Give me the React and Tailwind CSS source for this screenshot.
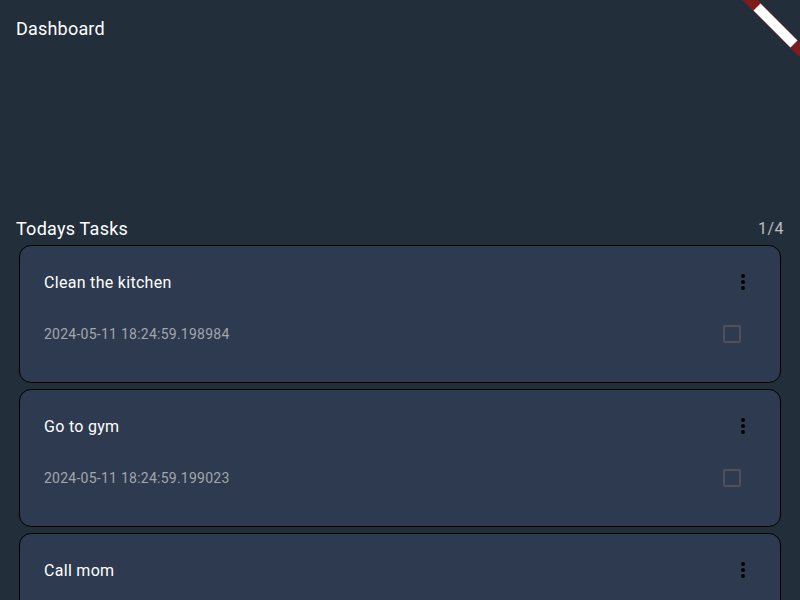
import React from "react";

const tasks = [
  { title: "Clean the kitchen", date: "2024-05-11 18:24:59.198984" },
  { title: "Go to gym", date: "2024-05-11 18:24:59.199023" },
  { title: "Call mom", date: "2024-05-11 18:24:59.199050" },
];

function Kebab() {
  return (
    <svg width="4" height="16" viewBox="0 0 4 16" className="block">
      <circle cx="2" cy="2" r="2" fill="#000" />
      <circle cx="2" cy="8" r="2" fill="#000" />
      <circle cx="2" cy="14" r="2" fill="#000" />
    </svg>
  );
}

function TaskCard({ title, date }) {
  return (
    <div className="h-[138px] shrink-0 rounded-[12px] border border-black bg-[#2d3a4f] pl-[24px] flex flex-col">
      <div className="mt-[25px] h-[24px] flex items-center justify-between pr-[35px]">
        <span className="text-[16px] leading-[24px] font-normal tracking-[0.3px] text-white">{title}</span>
        <div className="-mt-[2px]">
          <Kebab />
        </div>
      </div>
      <div className="mt-[29px] h-[20px] flex items-center justify-between pr-[39px]">
        <span className="text-[14px] leading-[20px] tracking-[0.25px] text-[#a3a6ab]">{date}</span>
        <div className="w-[18px] h-[18px] border-2 border-[#514f58] rounded-[2px]" />
      </div>
    </div>
  );
}

export default function App() {
  return (
    <div
      className="relative w-[800px] h-[600px] overflow-hidden bg-[#222e3a] text-white"
      style={{ fontFamily: "Roboto, 'Noto Sans', sans-serif" }}
    >
      <div className="px-4 pt-[18px] text-[18px] leading-[21px] tracking-[0.2px]">Dashboard</div>
      <div className="mt-[179px] px-4 flex items-center justify-between h-[22px]">
        <span className="text-[18px] leading-[22px] tracking-[0.25px]">Todays Tasks</span>
        <span className="text-[16px] leading-[22px] tracking-[0.5px] text-[#bdbdbd]">1/4</span>
      </div>
      <div className="mt-[5px] mx-[19px] flex flex-col gap-[6px]">
        {tasks.map((t) => (
          <TaskCard key={t.date} title={t.title} date={t.date} />
        ))}
      </div>
      <svg
        className="absolute top-0 right-0"
        width="60"
        height="56"
        viewBox="0 0 60 56"
      >
        <line x1="0" y1="-10" x2="70" y2="60" stroke="#7e1b1c" strokeWidth="11" />
        <line x1="17" y1="7" x2="54" y2="44" stroke="#ffffff" strokeWidth="10" />
      </svg>
    </div>
  );
}
